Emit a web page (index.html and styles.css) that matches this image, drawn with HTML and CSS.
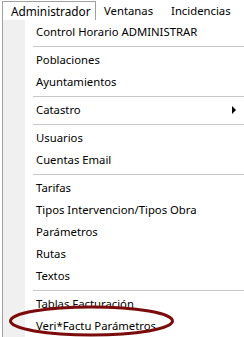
FILE: index.html
```html
<!DOCTYPE html>
<html lang="es">
<head>
    <meta charset="UTF-8">
    <title>Administrador</title>
    <link rel="stylesheet" href="styles.css">
</head>
<body>
    <div class="window">
        <div class="menubar">
            <span class="menu-title active">Administrador</span>
            <span class="menu-title">Ventanas</span>
            <span class="menu-title">Incidencias</span>
        </div>
        <div class="dropdown">
            <div class="item">Control Horario ADMINISTRAR</div>
            <div class="separator"></div>
            <div class="item">Poblaciones</div>
            <div class="item">Ayuntamientos</div>
            <div class="separator"></div>
            <div class="item submenu">Catastro <span class="arrow"></span></div>
            <div class="separator"></div>
            <div class="item">Usuarios</div>
            <div class="item">Cuentas Email</div>
            <div class="separator"></div>
            <div class="item">Tarifas</div>
            <div class="item">Tipos Intervencion/Tipos Obra</div>
            <div class="item">Parámetros</div>
            <div class="item">Rutas</div>
            <div class="item">Textos</div>
            <div class="separator"></div>
            <div class="item">Tablas Facturación</div>
            <div class="item">Veri*Factu Parámetros</div>
        </div>

        <!-- red hand-drawn mark around the last entry -->
        <svg class="highlight" width="180" height="40" viewBox="0 0 180 40">
            <ellipse cx="90.5" cy="19" rx="81" ry="14" fill="none" stroke="#7b0a0a" stroke-width="3"/>
        </svg>
    </div>
</body>
</html>
```

FILE: styles.css
```css
body {
    margin: 0;
    padding: 0;
    background-color: #fff;
    font-family: "Noto Sans", Arial, sans-serif;
    font-size: 11.3px;
    color: #000;
}

.window {
    position: relative;
    width: 244px;
    height: 337px;
    overflow: hidden;
}

.menubar {
    display: flex;
    height: 20px;
    background-color: #fff;
}

.menu-title {
    line-height: 19px;
    padding: 0 9px;
    margin-top: 1px;
}

.menu-title.active {
    margin-left: 2px;
    width: 84px;
    padding: 0 0 0 8px;
    border: 1px solid #a0a0a0;
    border-bottom: none;
    margin-right: -1px;
    font-size: 11.8px;
}

.dropdown {
    margin-left: 2px;
    border-left: 1px solid #a0a0a0;
    padding-top: 1px;
    height: 316px;
    background: linear-gradient(to right, #f0f0f0 22px, #fff 22px);
}

.item {
    height: 22px;
    line-height: 22px;
    padding-left: 33px;
    white-space: nowrap;
}

.submenu {
    display: flex;
    align-items: center;
    justify-content: space-between;
    padding-right: 8px;
}

.arrow {
    width: 0;
    height: 0;
    border-top: 4px solid transparent;
    border-bottom: 4px solid transparent;
    border-left: 4px solid #000;
}

.separator {
    height: 1px;
    background-color: #c8c8c8;
    margin: 3px 0 2px 30px;
}

.highlight {
    position: absolute;
    left: 1px;
    top: 302px;
}
```
